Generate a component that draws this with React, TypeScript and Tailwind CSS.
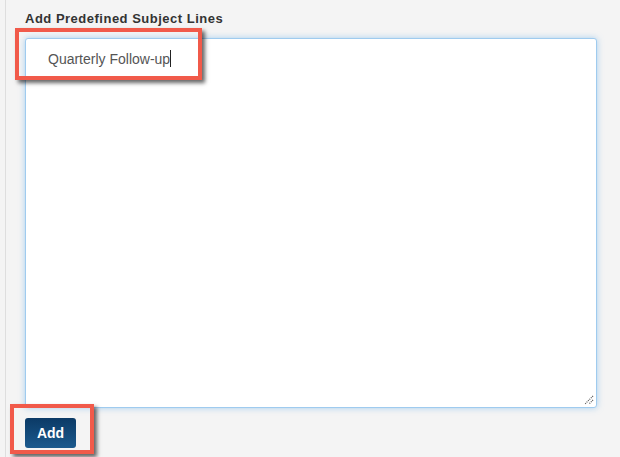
import React from "react";

export default function App() {
  return (
    <div
      className="relative w-[620px] h-[457px] overflow-hidden bg-[#f4f4f4]"
      style={{ fontFamily: '"Liberation Sans", Arial, sans-serif' }}
    >
      <div className="ml-[5px] h-full border-l border-[#dedede] pl-[19px] pt-[11px] flex flex-col">
        <div className="text-[13px] font-bold text-[#333] leading-[16px] tracking-[0.5px]">
          Add Predefined Subject Lines
        </div>
        <div className="relative mt-[11px] w-[572px] h-[370px] bg-white border border-[#9fcbef] rounded-[3px] shadow-[0_0_6px_rgba(102,175,233,0.55)] pl-[22px] pt-[8px]">
          <span className="text-[14px] leading-[20px] text-[#555]">Quarterly Follow-up</span>
          <span className="inline-block w-px h-[17px] bg-[#222] align-[-3px]" />
          <svg className="absolute right-[2px] bottom-[2px]" width="10" height="10" viewBox="0 0 10 10">
            <path d="M9 1 L1 9 M9 5 L5 9" stroke="#555" strokeWidth="1.2" strokeDasharray="1 1" fill="none" />
          </svg>
        </div>
        <div className="mt-[10px]">
          <button className="w-[51px] h-[30px] rounded-[3px] bg-gradient-to-b from-[#0b3a66] to-[#1b5a8e] text-white text-[14px] font-bold">
            Add
          </button>
        </div>
      </div>

      <div className="absolute left-[15px] top-[28px] w-[187px] h-[52px] border-4 border-[#f15a4a] shadow-[3px_3px_4px_rgba(0,0,0,0.6)]" />
      <div className="absolute left-[10px] top-[404px] w-[84px] h-[50px] border-4 border-[#f15a4a] shadow-[3px_3px_4px_rgba(0,0,0,0.6)]" />
    </div>
  );
}
